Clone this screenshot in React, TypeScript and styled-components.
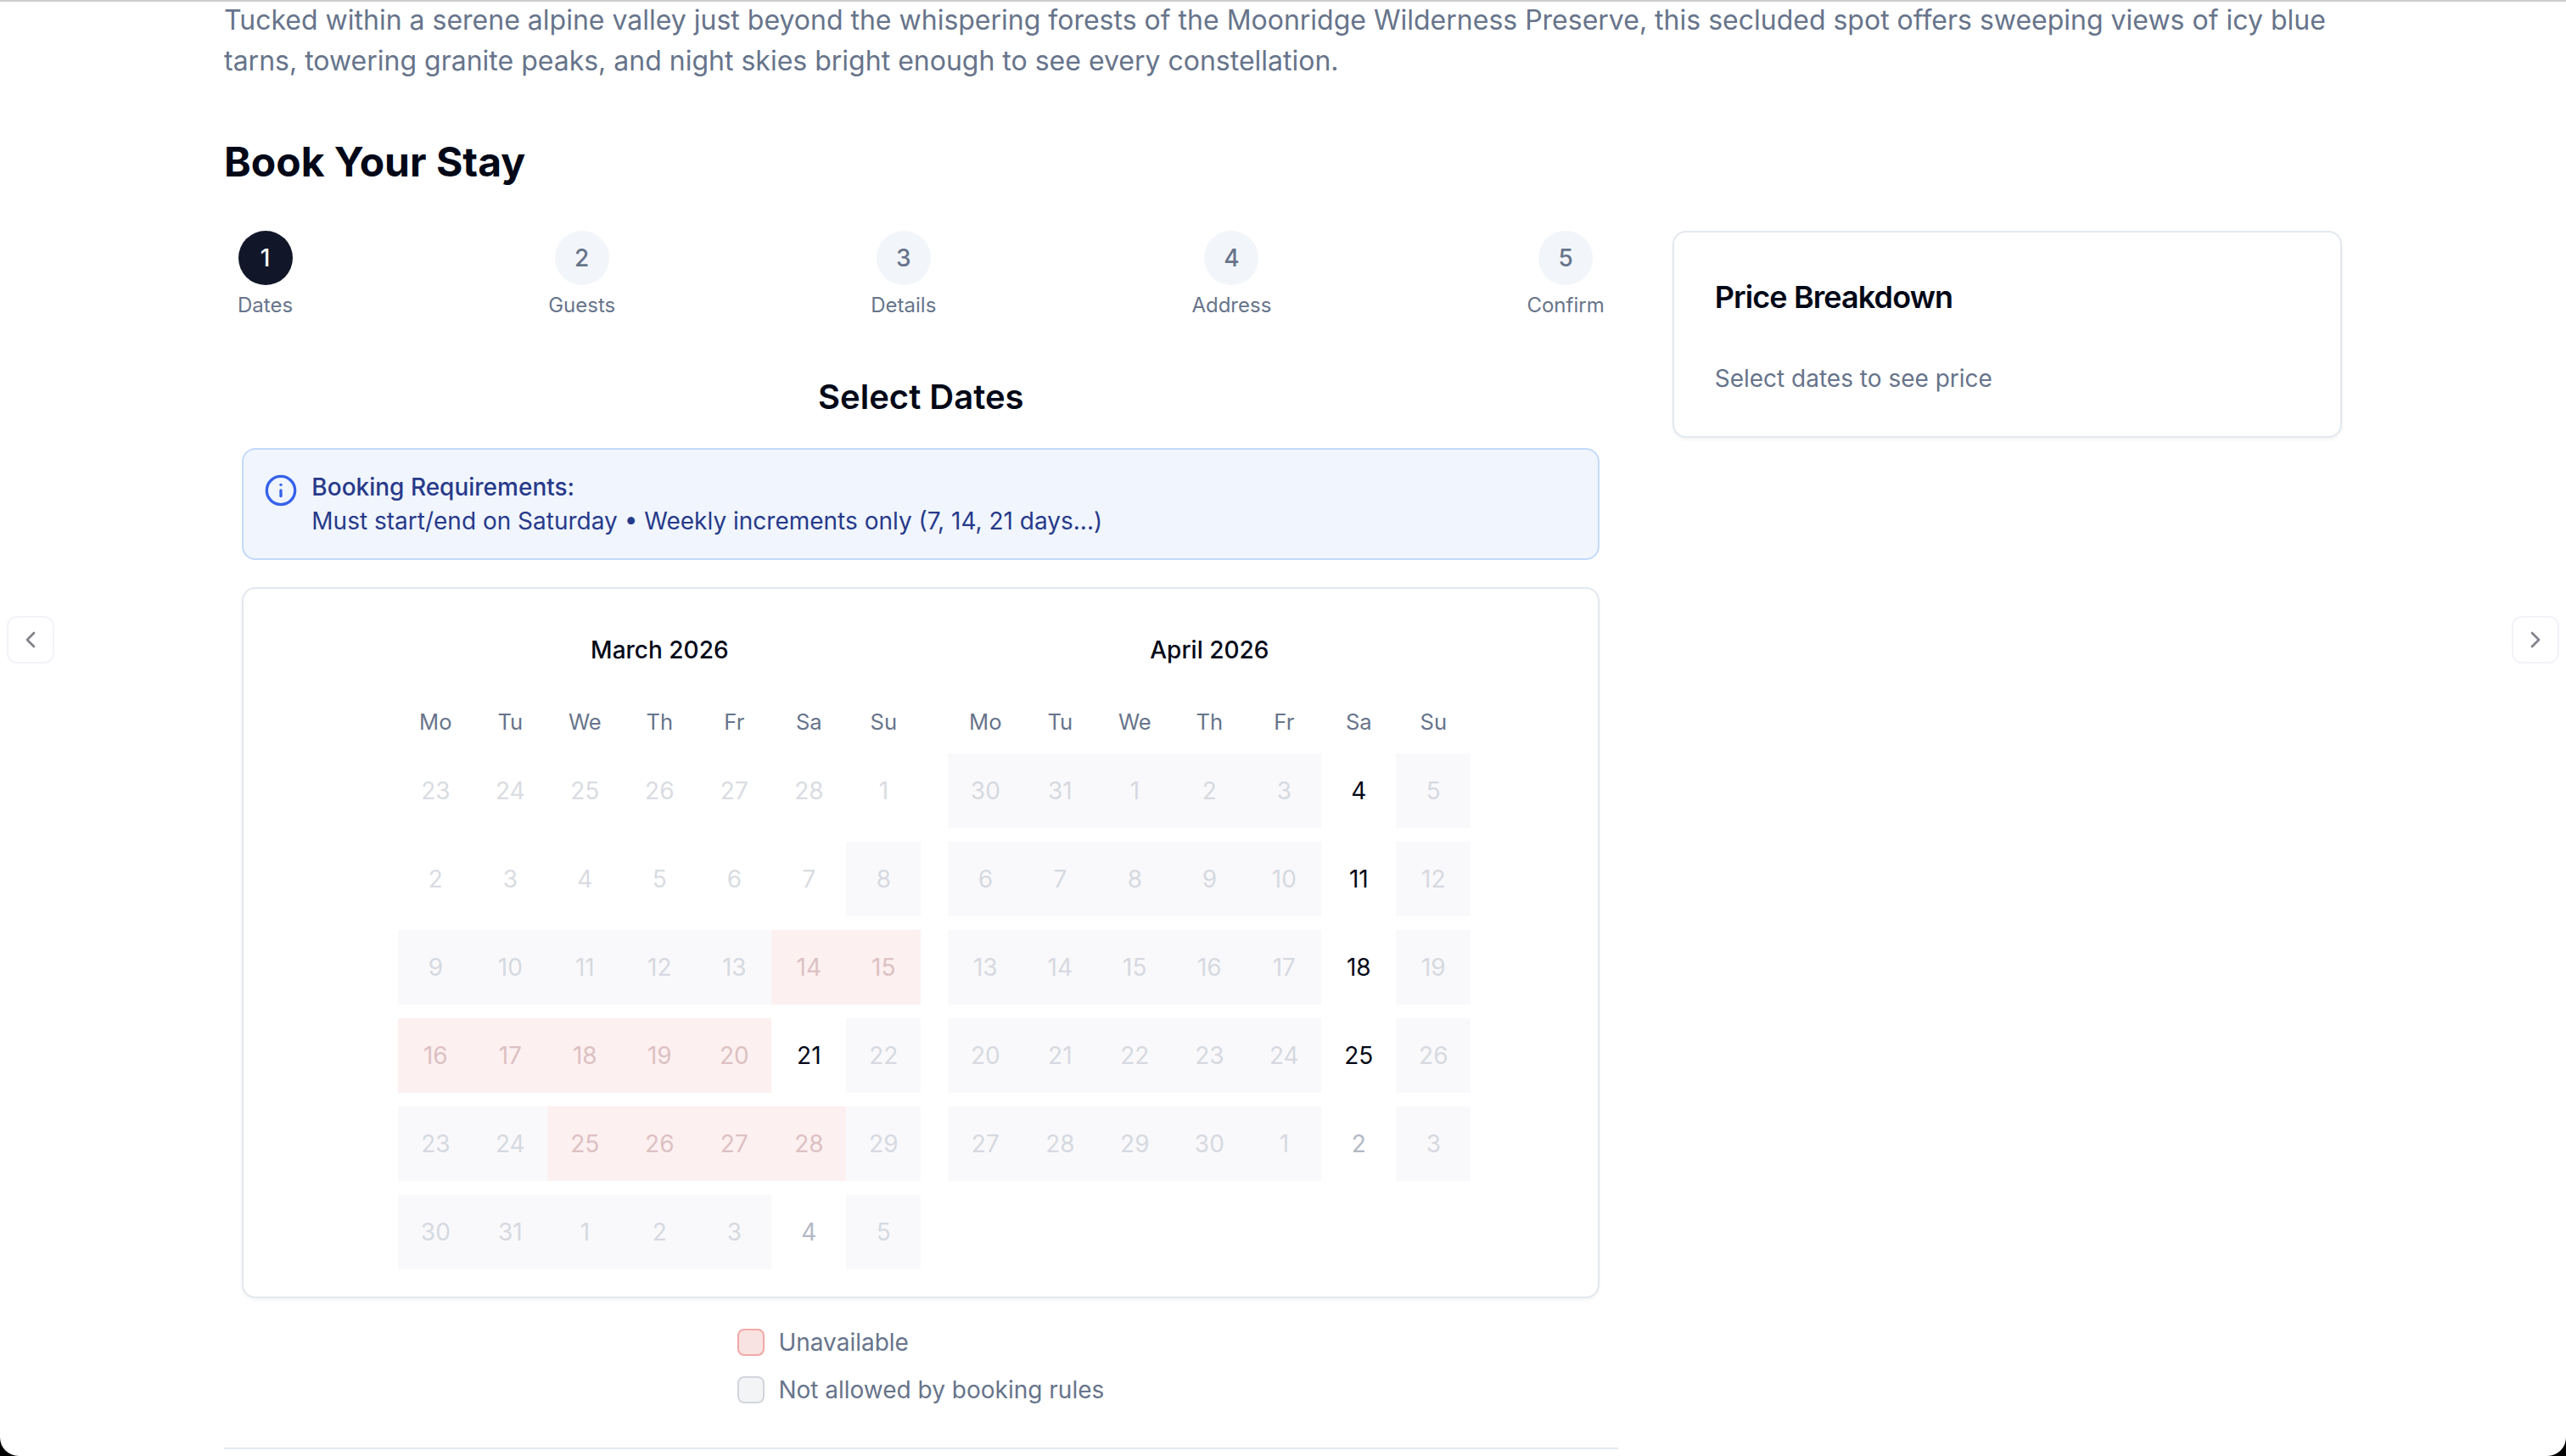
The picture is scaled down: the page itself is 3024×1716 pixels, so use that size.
import styled, { createGlobalStyle } from "styled-components";
import { ChevronLeft, ChevronRight, Info } from "lucide-react";

const GlobalStyle = createGlobalStyle`
    * {
        box-sizing: border-box;
    }
    body {
        margin: 0;
        background-color: black;
        color: #020817;
        font-family: Inter, "Liberation Sans", sans-serif;
        font-size: 28px;
        line-height: 40px;
    }
    h2, h3, p {
        margin: 0;
    }
`;

const Page = styled.div`
    position: relative;
    height: 1716px;
    overflow: hidden;
    padding: 0px 264px;
    background-color: white;
    border-top: 2px solid #cccccc;
    border-radius: 0px 0px 22px 22px;
`;

const Description = styled.p`
    margin-top: -2px;
    font-size: 32px;
    line-height: 48px;
    color: #67748b;
`;

const Heading = styled.h2`
    margin: 63px 0px 49px;
    font-size: 48px;
    line-height: 64px;
    font-weight: 700;
`;

const Columns = styled.div`
    display: grid;
    grid-template-columns: 2fr 789.33px;
    align-items: start;
    column-gap: 64px;
`;

const Booking = styled.section`
    height: 1436px;
    border-bottom: 2px solid #e3e8ef;
`;

const Steps = styled.div`
    display: flex;
    justify-content: space-between;
    padding: 0px 16px;
`;

const Step = styled.div`
    display: flex;
    flex-direction: column;
    align-items: center;
    gap: 8px;
    font-size: 24px;
    line-height: 32px;
    color: #67748b;
`;

const StepCircle = styled.div<{$active: boolean}>`
    width: 64px;
    height: 64px;
    display: flex;
    justify-content: center;
    align-items: center;
    border-radius: 50%;
    font-size: 28px;
    font-weight: 500;
    color: ${(props) => props.$active ? "#f8fafc" : "#67748b"};
    background-color: ${(props) => props.$active ? "#111729" : "#f2f5f9"};
`;

const DateStep = styled.div`
    width: 1600px;
    margin: 64px auto 0px;
    display: flex;
    flex-direction: column;
`;

const StepTitle = styled.h3`
    font-size: 40px;
    line-height: 56px;
    font-weight: 600;
    text-align: center;
    margin-bottom: 32px;
`;

const Notice = styled.div`
    display: flex;
    gap: 16px;
    padding: 24px;
    border: 2px solid #c4dafb;
    border-radius: 16px;
    background-color: #f0f5fe;
    color: #273a8a;

    svg {
        margin-top: 4px;
        color: #3662e9;
    }
    strong {
        display: block;
        font-weight: 500;
    }
`;

const Card = styled.div`
    background-color: white;
    border: 2px solid #e3e8ef;
    border-radius: 16px;
    box-shadow: 0px 2px 4px rgba(0, 0, 0, 0.05);
`;

const CalendarCard = styled(Card)`
    display: flex;
    justify-content: center;
    gap: 32px;
    margin-top: 32px;
    padding: 32px 0px 32px 32px;
`;

const Month = styled.div`
    width: 616px;
`;

const MonthName = styled.div`
    padding: 20px 0px;
    font-weight: 500;
    text-align: center;
`;

const Week = styled.div`
    display: grid;
    grid-template-columns: repeat(7, 88px);
    margin-top: 16px;
`;

const WeekDay = styled.div`
    height: 40px;
    margin-top: 10px;
    font-size: 25.6px;
    line-height: 38px;
    text-align: center;
    color: #67748b;
`;

const dayColors = {
    open: { color: "#020817", background: "transparent" },
    outside: { color: "#b3b9c5", background: "transparent" },
    past: { color: "#d9dce2", background: "transparent" },
    rule: { color: "#d6d9e0", background: "#f9f9fb" },
    booked: { color: "#dcc1c3", background: "#fdf0f0" },
};

type DayKind = keyof typeof dayColors;

const Day = styled.div<{$kind: DayKind}>`
    height: 88px;
    display: flex;
    justify-content: center;
    align-items: center;
    color: ${(props) => dayColors[props.$kind].color};
    background-color: ${(props) => dayColors[props.$kind].background};
`;

const Legend = styled.div`
    align-self: center;
    display: flex;
    flex-direction: column;
    gap: 16px;
    margin-top: 32px;
    color: #67748b;
`;

const LegendItem = styled.div`
    display: flex;
    align-items: center;
    gap: 16px;
`;

const Swatch = styled.div<{$color: string; $border: string}>`
    width: 32px;
    height: 32px;
    border: 2px solid ${(props) => props.$border};
    border-radius: 8px;
    background-color: ${(props) => props.$color};
`;

const PriceCard = styled(Card)`
    padding: 48px;
    color: #67748b;
`;

const PriceTitle = styled.h3`
    margin-bottom: 48px;
    font-size: 36px;
    line-height: 56px;
    font-weight: 600;
    letter-spacing: -0.9px;
    color: #020817;
`;

const NavButton = styled.button<{$side: "left" | "right"}>`
    position: absolute;
    top: 724px;
    ${(props) => props.$side}: 8px;
    width: 56px;
    height: 56px;
    display: flex;
    justify-content: center;
    align-items: center;
    padding: 0px;
    border: 2px solid #f2f3f9;
    border-radius: 12px;
    background-color: white;
    color: #808289;
`;

const steps = ["Dates", "Guests", "Details", "Address", "Confirm"];

const weekDays = ["Mo", "Tu", "We", "Th", "Fr", "Sa", "Su"];

const kinds: Record<string, DayKind> = {
    a: "open",
    o: "outside",
    p: "past",
    r: "rule",
    x: "booked",
};

// lead: days shown from the previous month, weeks: one letter per day
const months = [
    {
        name: "March 2026",
        lead: [23, 24, 25, 26, 27, 28],
        length: 31,
        weeks: ["ppppppp", "ppppppr", "rrrrrxx", "xxxxxar", "rrxxxxr", "rrrrror"],
    },
    {
        name: "April 2026",
        lead: [30, 31],
        length: 30,
        weeks: ["rrrrrar", "rrrrrar", "rrrrrar", "rrrrrar", "rrrrror"],
    },
];

function getDay(lead: number[], length: number, index: number){
    if (index < lead.length) {
        return lead[index];
    }
    return (index - lead.length) % length + 1;
}

function Calendar(){
    return (
        <CalendarCard>
            {months.map((month) => (
                <Month key={month.name}>
                    <MonthName>{month.name}</MonthName>
                    <Week>
                        {weekDays.map((day) => <WeekDay key={day}>{day}</WeekDay>)}
                    </Week>
                    {month.weeks.map((week, row) => (
                        <Week key={row}>
                            {week.split("").map((kind, i) => (
                                <Day key={i} $kind={kinds[kind]}>
                                    {getDay(month.lead, month.length, row * 7 + i)}
                                </Day>
                            ))}
                        </Week>
                    ))}
                </Month>
            ))}
        </CalendarCard>
    );
}

function App(){
    return (
        <Page>
            <GlobalStyle />
            <Description>
                Tucked within a serene alpine valley just beyond the whispering forests of the Moonridge Wilderness Preserve, this secluded spot offers sweeping views of icy blue tarns, towering granite peaks, and night skies bright enough to see every constellation.
            </Description>
            <Heading>Book Your Stay</Heading>
            <Columns>
                <Booking>
                    <Steps>
                        {steps.map((step, i) => (
                            <Step key={step}>
                                <StepCircle $active={i === 0}>{i + 1}</StepCircle>
                                <span>{step}</span>
                            </Step>
                        ))}
                    </Steps>
                    <DateStep>
                        <StepTitle>Select Dates</StepTitle>
                        <Notice>
                            <Info size={40} />
                            <div>
                                <strong>Booking Requirements:</strong>
                                Must start/end on Saturday • Weekly increments only (7, 14, 21 days...)
                            </div>
                        </Notice>
                        <Calendar />
                        <Legend>
                            <LegendItem>
                                <Swatch $color="#f9e3e2" $border="#f1a8a7" />
                                Unavailable
                            </LegendItem>
                            <LegendItem>
                                <Swatch $color="#f3f4f6" $border="#d2d5db" />
                                Not allowed by booking rules
                            </LegendItem>
                        </Legend>
                    </DateStep>
                </Booking>
                <PriceCard>
                    <PriceTitle>Price Breakdown</PriceTitle>
                    <p>Select dates to see price</p>
                </PriceCard>
            </Columns>
            <NavButton $side="left"><ChevronLeft size={32} /></NavButton>
            <NavButton $side="right"><ChevronRight size={32} /></NavButton>
        </Page>
    );
}

export default App;
